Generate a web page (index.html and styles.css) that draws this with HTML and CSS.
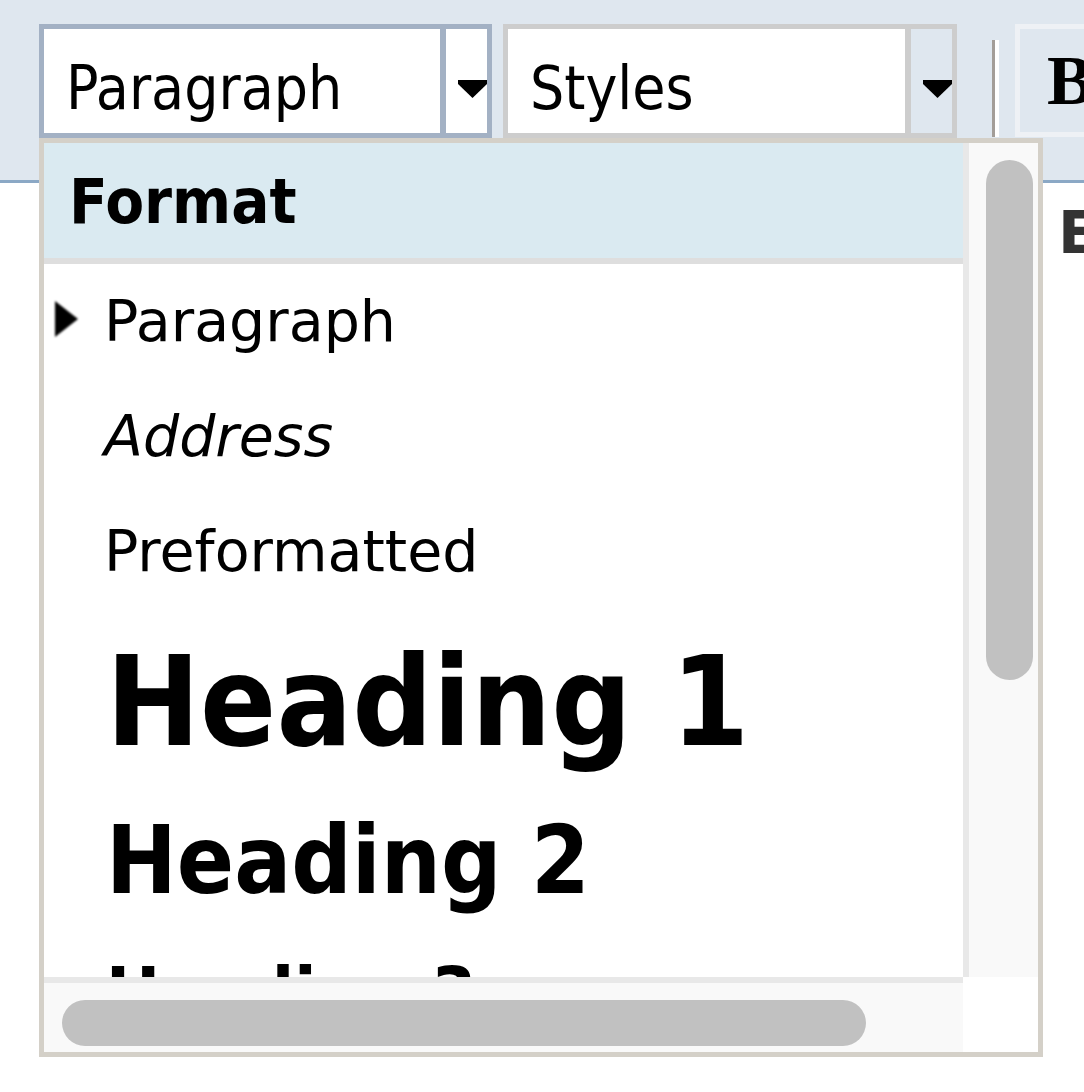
FILE: index.html
```html
<!DOCTYPE html>
<html lang="en">
<head>
    <meta charset="UTF-8">
    <title>Format dropdown</title>
    <link rel="stylesheet" href="styles.css">
</head>
<body>
    <div class="toolbar">
        <div class="combo combo-format">
            <span class="combo-text">Paragraph</span>
            <span class="combo-btn">
                <svg width="29" height="18" viewBox="0 0 29 18"><polygon points="0,0 29,0 29,4 14.5,18 0,4" fill="#000"/></svg>
            </span>
        </div>
        <div class="combo combo-styles">
            <span class="combo-text">Styles</span>
            <span class="combo-btn">
                <svg width="29" height="18" viewBox="0 0 29 18"><polygon points="0,0 29,0 29,4 14.5,18 0,4" fill="#000"/></svg>
            </span>
        </div>
        <span class="separator"></span>
        <span class="tool-btn">B</span>
    </div>

    <div class="editor">
        <h2 class="editor-heading">Editor</h2>
    </div>

    <!-- open Format menu -->
    <div class="format-panel">
        <div class="panel-list">
            <div class="panel-title">Format</div>
            <div class="format-item item-p selected">Paragraph</div>
            <div class="format-item item-address">Address</div>
            <div class="format-item item-pre">Preformatted</div>
            <div class="format-item item-h1">Heading 1</div>
            <div class="format-item item-h2">Heading 2</div>
            <div class="format-item item-h3">Heading 3</div>
        </div>
        <div class="vscroll"><div class="thumb"></div></div>
        <div class="hscroll"><div class="thumb"></div></div>
        <div class="corner"></div>
    </div>
</body>
</html>
```

FILE: styles.css
```css
body {
    margin: 0;
    width: 1084px;
    height: 1092px;
    overflow: hidden;
    background: #fff;
    font-family: "DejaVu Sans", Verdana, sans-serif;
    position: relative;
}
.toolbar {
    box-sizing: border-box;
    height: 183px;
    padding: 24px 0 0 39px;
    background: #dfe7ef;
    border-bottom: 3px solid #8ba8c5;
    display: flex;
    align-items: flex-start;
    white-space: nowrap;
    overflow: hidden;
}
.toolbar > * {
    flex-shrink: 0;
}
.combo {
    box-sizing: border-box;
    display: flex;
    height: 114px;
    border: 5px solid #a3b1c4;
}
.combo-format {
    width: 453px;
}
.combo-styles {
    width: 454px;
    margin-left: 11px;
    border-color: #cdcdcd;
}
.combo-text {
    flex: 1;
    background: #fff;
    border-right: 6px solid #a3b1c4;
    padding: 16px 0 0 22px;
    line-height: 87px;
    font-size: 60px;
    font-stretch: condensed;
    color: #000;
}
.combo-styles .combo-text {
    border-right-color: #cdcdcd;
}
.combo-btn {
    width: 41px;
    background: #fff;
    display: flex;
    align-items: flex-start;
    justify-content: flex-end;
    padding-top: 51px;
    box-sizing: border-box;
}
.combo-styles .combo-btn {
    background: #dfe7ef;
}
.combo-btn svg {
    filter: blur(0.7px);
}
.separator {
    width: 3px;
    height: 97px;
    margin: 16px 0 0 35px;
    background: #a39d98;
    border-right: 4px solid #fff;
}
.tool-btn {
    box-sizing: border-box;
    width: 100px;
    height: 113px;
    margin-left: 16px;
    border: 5px solid #eef1f5;
    background: #dfe7ef;
    padding-left: 27px;
    font-family: "Liberation Serif", serif;
    font-weight: bold;
    font-size: 70px;
    line-height: 103px;
}
.editor {
    padding: 15px 0 0 1058px;
    white-space: nowrap;
}
.editor-heading {
    margin: 0;
    font-size: 59px;
    font-weight: bold;
    color: #333;
}

/* dropdown */
.format-panel {
    position: absolute;
    left: 39px;
    top: 138px;
    width: 1004px;
    height: 919px;
    box-sizing: border-box;
    border: 5px solid #d4d0c8;
    background: #fff;
    display: grid;
    grid-template-columns: 1fr 75px;
    grid-template-rows: 1fr 75px;
}
.panel-list {
    overflow: hidden;
    white-space: nowrap;
}
.panel-title {
    height: 115px;
    background: #daeaf1;
    border-bottom: 6px solid #dedede;
    padding-left: 25px;
    font-size: 63px;
    font-weight: bold;
    font-stretch: condensed;
    line-height: 117px;
}
.format-item {
    position: relative;
    padding-left: 60px;
    font-size: 57px;
    line-height: 115px;
    color: #000;
}
.format-item.selected::before {
    content: "";
    position: absolute;
    left: 11px;
    top: 37px;
    border-left: 23px solid #000;
    border-top: 18px solid transparent;
    border-bottom: 18px solid transparent;
    filter: blur(0.8px);
}
.item-address {
    font-style: italic;
}
.item-h1, .item-h2, .item-h3 {
    padding-left: 62px;
    font-weight: bold;
    font-stretch: condensed;
}
.item-h1 {
    font-size: 125px;
    line-height: 186px;
}
.item-h2 {
    font-size: 94px;
    line-height: 131px;
}
.item-h3 {
    font-size: 72px;
    line-height: 135px;
}
.vscroll {
    border-left: 6px solid #e8e8e8;
    background: #f9f9f9;
    padding: 17px 5px 0 17px;
}
.vscroll .thumb {
    height: 520px;
    border-radius: 24px;
    background: #c1c1c1;
}
.hscroll {
    border-top: 6px solid #e8e8e8;
    background: #f9f9f9;
    padding: 17px 0 0 18px;
}
.hscroll .thumb {
    width: 804px;
    height: 46px;
    border-radius: 23px;
    background: #c1c1c1;
}
.corner {
    background: #fff;
}
```
